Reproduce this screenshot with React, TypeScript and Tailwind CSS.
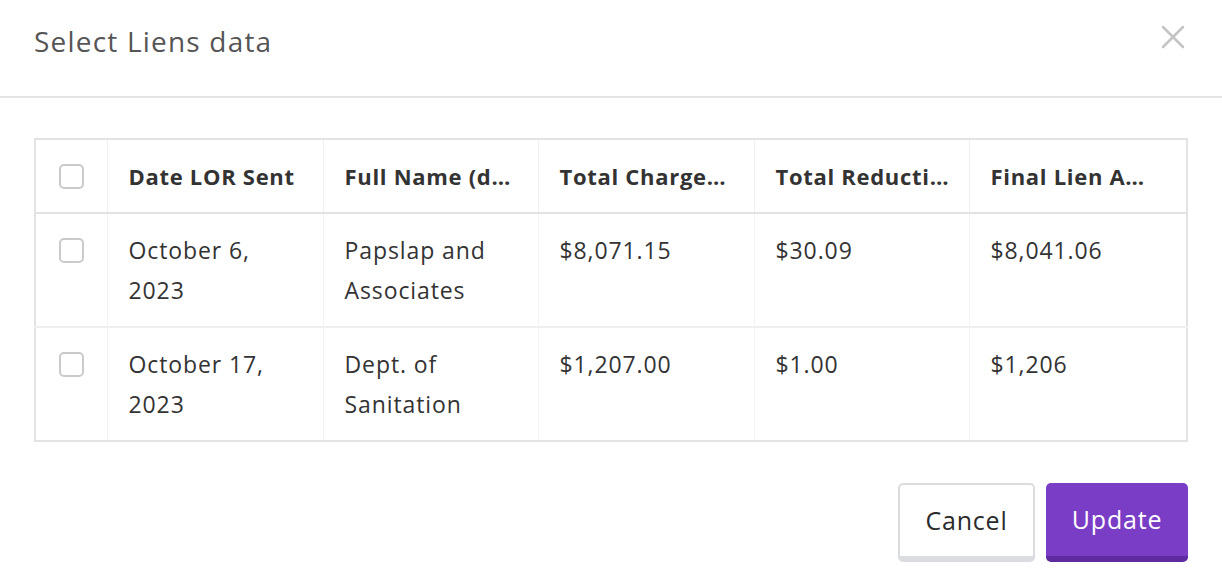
import { X } from 'lucide-react'

type TRow = {
	date: string[]
	name: string[]
	charges: string
	reduction: string
	final: string
}

const rows: TRow[] = [
	{
		date: ['October 6,', '2023'],
		name: ['Papslap and', 'Associates'],
		charges: '$8,071.15',
		reduction: '$30.09',
		final: '$8,041.06',
	},
	{
		date: ['October 17,', '2023'],
		name: ['Dept. of', 'Sanitation'],
		charges: '$1,207.00',
		reduction: '$1.00',
		final: '$1,206',
	},
]

const headers = ['Date LOR Sent', 'Full Name (d…', 'Total Charge…', 'Total Reducti…', 'Final Lien A…']

function Checkbox() {
	return <div className="h-[25px] w-[25px] rounded-[5px] border-2 border-[#cacaca] bg-white" />
}

export default function App() {
	return (
		<div
			className="w-[1222px] h-[582px] bg-white text-[#333]"
			style={{ fontFamily: '"Open Sans", "Liberation Sans", sans-serif' }}
		>
			<header className="h-[98px] flex items-start justify-between pl-[34px] pr-[29px] pt-[21px] border-b-2 border-[#e4e4e4]">
				<h1 className="text-[28px] leading-[40px] tracking-[1.2px] text-[#555]">Select Liens data</h1>
				<button className="-mt-[4px] text-[#c4c4c4]">
					<X size={40} strokeWidth={1.5} />
				</button>
			</header>

			<div className="px-[34px] pt-[40px]">
				<table className="w-full table-fixed border-collapse border-2 border-[#e3e3e3] text-[23px] tracking-[0.9px]">
					<colgroup>
						<col className="w-[72px]" />
						<col className="w-[216px]" />
						<col className="w-[215px]" />
						<col className="w-[216px]" />
						<col className="w-[215px]" />
						<col />
					</colgroup>
					<thead>
						<tr className="border-b-2 border-[#e3e3e3]">
							<th className="py-[16px] border-r border-[#f0f0f0]">
								<div className="h-[40px] flex items-center justify-center">
									<Checkbox />
								</div>
							</th>
							{headers.map((h, i) => (
								<th
									key={h}
									className={`px-[21px] py-[16px] text-left font-bold leading-[40px] text-[22px] tracking-[0.7px] whitespace-nowrap ${i < headers.length - 1 ? 'border-r border-[#f0f0f0]' : ''}`}
								>
									{h}
								</th>
							))}
						</tr>
					</thead>
					<tbody>
						{rows.map((r, i) => (
							<tr
								key={i}
								className={i < rows.length - 1 ? 'border-b-2 border-[#efefef]' : ''}
							>
								<td className="align-top py-[16px] border-r border-[#f3f3f3]">
									<div className="h-[40px] flex items-center justify-center">
										<Checkbox />
									</div>
								</td>
								<td className="align-top px-[21px] pt-[16px] pb-[16px] leading-[40px] border-r border-[#f3f3f3]">
									{r.date[0]}
									<br />
									{r.date[1]}
								</td>
								<td className="align-top px-[21px] pt-[16px] pb-[16px] leading-[40px] border-r border-[#f3f3f3]">
									{r.name[0]}
									<br />
									{r.name[1]}
								</td>
								<td className="align-top px-[21px] pt-[16px] pb-[16px] leading-[40px] border-r border-[#f3f3f3]">
									{r.charges}
								</td>
								<td className="align-top px-[21px] pt-[16px] pb-[16px] leading-[40px] border-r border-[#f3f3f3]">
									{r.reduction}
								</td>
								<td className="align-top px-[21px] pt-[16px] pb-[16px] leading-[40px]">{r.final}</td>
							</tr>
						))}
					</tbody>
				</table>

				<div className="flex justify-end gap-[11px] mt-[41px]">
					<button className="h-[79px] w-[137px] rounded-[5px] border-2 border-b-[6px] border-[#dadcdf] bg-white text-[25px] tracking-[0.8px] text-[#2b2b2b]">
						Cancel
					</button>
					<button className="h-[79px] w-[142px] rounded-[5px] border-b-[6px] border-[#5e2ba0] bg-[#7a3dc6] text-[25px] tracking-[0.8px] text-white">
						Update
					</button>
				</div>
			</div>
		</div>
	)
}
